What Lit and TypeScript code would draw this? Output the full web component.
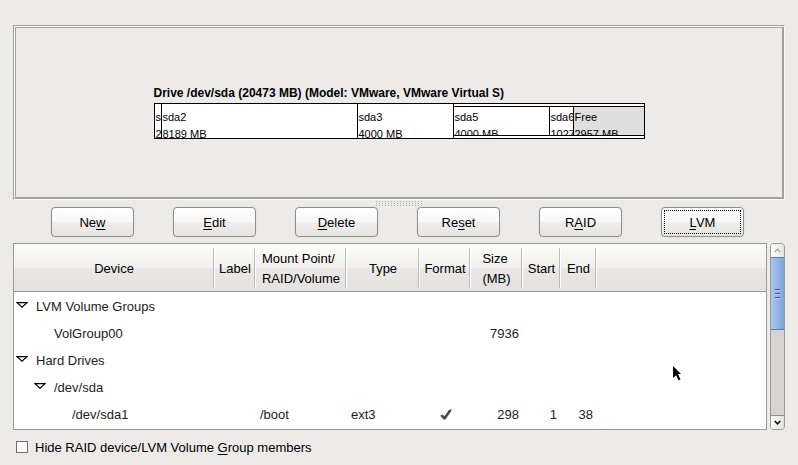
import { LitElement, html, css, svg, nothing } from "lit";
import { customElement, state } from "lit/decorators.js";
import { classMap } from "lit/directives/class-map.js";

interface Row {
  name: string;
  depth: number;
  open?: boolean;
  mount?: string;
  type?: string;
  format?: boolean;
  size?: string;
  start?: string;
  end?: string;
}

const ROWS: Row[] = [
  { name: "LVM Volume Groups", depth: 0, open: true },
  { name: "VolGroup00", depth: 1, size: "7936" },
  { name: "Hard Drives", depth: 0, open: true },
  { name: "/dev/sda", depth: 1, open: true },
  { name: "/dev/sda1", depth: 2, mount: "/boot", type: "ext3", format: true, size: "298", start: "1", end: "38" },
];

const ACTIONS: [string, string, string][] = [
  ["Ne", "w", ""],
  ["", "E", "dit"],
  ["", "D", "elete"],
  ["Re", "s", "et"],
  ["R", "A", "ID"],
  ["", "L", "VM"],
];

@customElement("drive-map")
class DriveMap extends LitElement {
  static styles = css`
    :host {
      display: block;
      width: 491px;
      color: #000;
      font-size: 11px;
      line-height: 17px;
    }
    .title {
      margin: 0 0 1px;
      font-size: 12px;
      line-height: 18px;
      font-weight: bold;
      white-space: nowrap;
    }
    .bar {
      display: flex;
      box-sizing: border-box;
      height: 36px;
      border: 1px solid #000;
      background: #fff;
    }
    .part {
      box-sizing: border-box;
      overflow: hidden;
      padding: 5px 0 0 1px;
      border-right: 1px solid #000;
      white-space: nowrap;
    }
    .extended {
      display: flex;
      flex: 1;
      min-width: 0;
      margin: 2px 0;
      border: solid #000;
      border-width: 1px 0;
    }
    .extended .part {
      padding-top: 2px;
    }
    .extended .part.free {
      flex: 1;
      border-right: 0;
      background: #dfdfdf;
    }
  `;

  private part(name: string, size: string, share: number) {
    return html`<div class="part" style="width:${share}px">${name}<br />${size}</div>`;
  }

  render() {
    return html`
      <h2 class="title">Drive /dev/sda (20473 MB) (Model: VMware, VMware Virtual S)</h2>
      <div class="bar">
        ${this.part("sda1", "298 MB", 7)} ${this.part("sda2", "8189 MB", 196)} ${this.part("sda3", "4000 MB", 96)}
        <div class="extended">
          ${this.part("sda5", "4000 MB", 96)} ${this.part("sda6", "1027 MB", 24)}
          <div class="part free">Free<br />2957 MB</div>
        </div>
      </div>
    `;
  }
}

@customElement("scroll-rail")
class ScrollRail extends LitElement {
  static styles = css`
    :host {
      display: flex;
      flex-direction: column;
      box-sizing: border-box;
      width: 15px;
      border: 1px solid #999997;
      border-radius: 4px;
      overflow: hidden;
      background: #d5d4d2;
    }
    button {
      display: flex;
      align-items: center;
      justify-content: center;
      height: 13px;
      padding: 0;
      border: 0;
      background: linear-gradient(90deg, #fff, #e2e1df);
    }
    .down {
      border-top: 1px solid #8f8f8d;
      margin-top: auto;
      height: 14px;
    }
    .thumb {
      display: flex;
      flex-direction: column;
      align-items: center;
      justify-content: center;
      gap: 2px;
      box-sizing: border-box;
      height: 73px;
      border: solid #5680b5;
      border-width: 1px 0;
      box-shadow: -1px 0 #5680b5, 1px 0 #5680b5;
      background: linear-gradient(90deg, #abc8ee, #8fb2e2 60%, #7ea4d8);
    }
    .thumb i {
      width: 5px;
      height: 1px;
      background: #34598a;
      border-bottom: 1px solid #b4d0f4;
    }
  `;

  render() {
    return html`
      <button aria-label="Scroll up">
        <svg width="7" height="5" viewBox="0 0 7 5"><path d="M.7 4 3.5 1.2 6.3 4" fill="none" stroke="#a9a9a7" stroke-width="1.4" /></svg>
      </button>
      <div class="thumb"><i></i><i></i><i></i></div>
      <button class="down" aria-label="Scroll down">
        <svg width="7" height="5" viewBox="0 0 7 5"><path d="M.7 1 3.5 3.8 6.3 1" fill="none" stroke="#111" stroke-width="1.6" /></svg>
      </button>
    `;
  }
}

@customElement("app-root")
class AppRoot extends LitElement {
  static styles = css`
    :host {
      display: block;
      position: relative;
      box-sizing: border-box;
      min-height: 100vh;
      padding: 25px 13px 7px;
      background: #ecebe9;
      color: #000;
      font: 13px/20px "Liberation Sans", Arial, sans-serif;
    }
    button {
      font: inherit;
      color: inherit;
    }
    u {
      text-underline-offset: 2px;
      text-decoration-thickness: 1px;
      text-decoration-skip-ink: none;
    }
    .panel {
      border: 1px solid #9f9f9c;
      border-right-color: #fbfbfa;
      border-bottom-color: #fbfbfa;
      background: #ecebe9;
    }
    .inner {
      display: flex;
      justify-content: center;
      padding: 56px 0 58px;
      border: 1px solid #a3a3a0;
    }
    .rim {
      border: 1px solid #fbfbfa;
      border-right-color: #9f9f9c;
      border-bottom-color: #9f9f9c;
    }
    .grip {
      width: 47px;
      height: 5px;
      margin: 1px auto;
      background: conic-gradient(from 270deg at 1px 1px, #adadab 90deg, transparent 0) 0 0 / 3px 2px;
    }
    .actions {
      display: flex;
      justify-content: center;
      gap: 39px;
      margin: 0 3px 6px 0;
    }
    .action {
      box-sizing: border-box;
      width: 83px;
      height: 30px;
      padding: 2px;
      border: 1px solid #8e8e8c;
      border-radius: 4px;
      background: linear-gradient(#fff, #f8f8f8 50%, #efeeed 52%, #e5e4e2);
      box-shadow: 0 0 1px #bbbab8;
    }
    .action span {
      display: block;
      padding-top: 2px;
      border: 1px solid transparent;
      line-height: 20px;
    }
    .action.focused span {
      border: 1px dotted #000;
    }
    .list {
      display: flex;
      gap: 3px;
    }
    .frame {
      flex: 1;
      min-width: 0;
      border: 1px solid #999997;
      background: #fff;
      padding-bottom: 1px;
    }
    table {
      width: 100%;
      table-layout: fixed;
      border-collapse: separate;
      border-spacing: 0;
    }
    th {
      height: 47px;
      padding: 0;
      border-bottom: 1px solid #999997;
      font-weight: normal;
      background: linear-gradient(#fbfbfa, #f2f1f0 50%, #e9e8e6 51%, #e3e2e0);
    }
    .head {
      display: flex;
      align-items: center;
      justify-content: center;
      box-sizing: border-box;
      height: 40px;
      padding-top: 3px;
      border-right: 1px solid #fff;
      box-shadow: inset -1px 0 #bcbbb9;
      text-align: left;
      white-space: nowrap;
    }
    .last .head {
      border: 0;
      box-shadow: none;
    }
    tbody tr:first-child td {
      border-top: 1px solid #fff;
    }
    td {
      height: 27px;
      padding: 0 3px 0 4px;
      color: #1c1c1c;
      white-space: nowrap;
    }
    td.num {
      padding: 0 4px 0 0;
      text-align: right;
    }
    td.center {
      padding: 0;
      text-align: center;
    }
    td.center svg {
      display: block;
      margin: 0 auto;
    }
    td.device {
      padding: 0;
    }
    .cell {
      display: flex;
      align-items: center;
    }
    .pad {
      flex: none;
      width: 18px;
    }
    .slot {
      flex: none;
      display: flex;
      width: 22px;
      padding: 0;
      border: 0;
      background: none;
    }
    .slot svg {
      margin: 0 0 2px 2px;
    }
    .c-device { width: 201px; }
    .c-label { width: 41px; }
    .c-mount { width: 91px; }
    .c-type { width: 73px; }
    .c-format { width: 51px; }
    .c-size { width: 52px; }
    .c-start { width: 38px; }
    .c-end { width: 36px; }
    .hide {
      display: flex;
      align-items: center;
      gap: 7px;
      margin-top: 8px;
      padding-left: 3px;
    }
    .hide input {
      appearance: none;
      box-sizing: border-box;
      width: 12px;
      height: 12px;
      margin: 0 0 3px;
      border: 1px solid #6f6f6d;
      background: #fff;
    }
    .hide input:checked {
      background: #4a7ab8;
    }
    .pointer {
      position: absolute;
      left: 673px;
      top: 366px;
      pointer-events: none;
    }
  `;

  @state() private hideMembers = false;

  private head(label: unknown, last = false) {
    return html`<th scope="col" class=${classMap({ last })}><div class="head"><span>${label}</span></div></th>`;
  }

  private row(r: Row) {
    const arrow = svg`<path d="M1 .7H11L6 5.3Z" fill="#fff" stroke="#000" stroke-width="1.2" />`;
    return html`<tr>
      <td class="device">
        <div class="cell">
          ${Array.from({ length: r.depth }, () => html`<span class="pad"></span>`)}
          ${r.open
            ? html`<button class="slot" aria-label="Collapse ${r.name}"><svg width="12" height="7" viewBox="0 0 12 7">${arrow}</svg></button>`
            : html`<span class="slot"></span>`}
          ${r.name}
        </div>
      </td>
      <td></td>
      <td>${r.mount}</td>
      <td>${r.type}</td>
      <td class="center">
        ${r.format
          ? html`<svg width="12" height="12" viewBox="0 0 12 12" role="img" aria-label="Yes">
              <path d="M.2 6.8 2.6 5.6 4.4 7.2 8.8 1.2 11.4 0 11 2.6 5.4 10.4 3.6 10.6Z" fill="#484848" />
            </svg>`
          : nothing}
      </td>
      <td class="num">${r.size}</td>
      <td class="num">${r.start}</td>
      <td class="num">${r.end}</td>
      <td></td>
    </tr>`;
  }

  render() {
    return html`
      <div class="panel"><div class="rim"><div class="inner"><drive-map></drive-map></div></div></div>
      <div class="grip"></div>
      <div class="actions">
        ${ACTIONS.map(
          ([a, key, b]) => html`<button class=${classMap({ action: true, focused: key === "L" })}><span>${a}<u>${key}</u>${b}</span></button>`
        )}
      </div>
      <div class="list">
        <div class="frame">
          <table>
            <colgroup>
              ${["device", "label", "mount", "type", "format", "size", "start", "end", "rest"].map((c) => html`<col class="c-${c}" />`)}
            </colgroup>
            <thead>
              <tr>
                ${this.head("Device")} ${this.head("Label")} ${this.head(html`Mount Point/<br />RAID/Volume`)}
                ${this.head("Type")} ${this.head("Format")} ${this.head(html`Size<br />(MB)`)} ${this.head("Start")}
                ${this.head("End")} ${this.head("", true)}
              </tr>
            </thead>
            <tbody>
              ${ROWS.map((r) => this.row(r))}
            </tbody>
          </table>
        </div>
        <scroll-rail></scroll-rail>
      </div>
      <label class="hide">
        <input
          type="checkbox"
          .checked=${this.hideMembers}
          @change=${(e: Event) => (this.hideMembers = (e.target as HTMLInputElement).checked)}
        />
        <span>Hide RAID device/LVM Volume <u>G</u>roup members</span>
      </label>
      <svg class="pointer" width="10" height="16" viewBox="0 0 10 16" aria-hidden="true">
        <path d="M0 0 8 8H5L7.5 13.5 5.5 14.5 3.2 9.2 0 12Z" />
      </svg>
    `;
  }
}
